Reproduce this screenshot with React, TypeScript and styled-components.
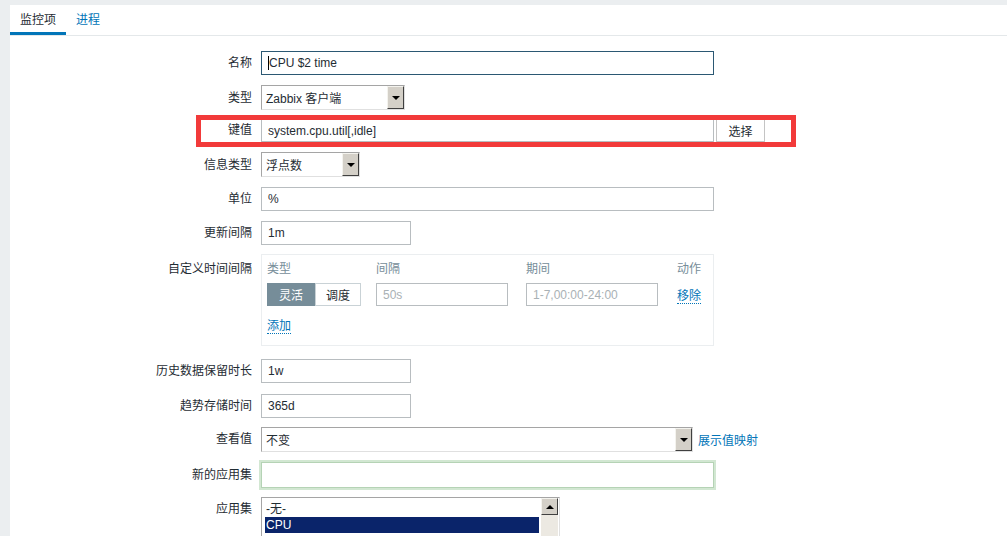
import React from "react";
import styled, { createGlobalStyle, css } from "styled-components";

//colors
const colors = {
  page: "#ebeef0",
  text: "#1f2c33",
  link: "#0275b8",
  muted: "#768d99",
  border: "#b8bdc0",
  classic: "#d4d0c8",
  navy: "#0a246a",
  red: "#f23a3a",
};

const GlobalStyle = createGlobalStyle`
  html, body {
    margin: 0;
    padding: 0;
    background: ${colors.page};
  }
  body {
    font-family: "Liberation Sans", "Noto Sans CJK SC", Arial, sans-serif;
    font-size: 12px;
    color: ${colors.text};
    overflow: hidden;
  }
`;

//white page panel
const Panel = styled.div`
  margin: 5px 0 0 10px;
  min-height: 531px;
  background: #ffffff;
`;

//tabs
const TabBar = styled.div`
  display: flex;
  height: 30px;
  border-bottom: 1px solid #e4e8ea;
`;

const Tab = styled.div<{ $active?: boolean }>`
  padding: 8px 10px 0;
  line-height: 14px;
  font-size: 12px;
  color: ${(p) => (p.$active ? colors.text : colors.link)};
  border-bottom: 3px solid ${(p) => (p.$active ? colors.link : "transparent")};
`;

//form
const Form = styled.div`
  display: flex;
  flex-direction: column;
  gap: 10px;
  padding-top: 15px;
`;

const Row = styled.div<{ $mark?: boolean; $gap?: number }>`
  position: relative;
  display: flex;
  align-items: flex-start;
  margin-top: ${(p) => p.$gap ?? 0}px;
  ${(p) =>
    p.$mark &&
    css`
      &::after {
        content: "";
        position: absolute;
        left: 186px;
        top: -4px;
        width: 590px;
        height: 22px;
        border: 5px solid ${colors.red};
        pointer-events: none;
      }
    `}
`;

const Label = styled.div<{ $top?: number }>`
  width: 242px;
  padding-right: 9px;
  padding-top: ${(p) => p.$top ?? 5}px;
  text-align: right;
  line-height: 14px;
  flex-shrink: 0;
`;

const Field = styled.div`
  display: flex;
  align-items: center;
`;

const TextBox = styled.div<{ $w: number; $h?: number; $focus?: boolean; $glow?: boolean; $placeholder?: boolean }>`
  box-sizing: border-box;
  width: ${(p) => p.$w}px;
  height: ${(p) => p.$h ?? 24}px;
  padding: 0 6px;
  display: flex;
  align-items: center;
  background: #fff;
  border: 1px solid ${(p) => (p.$focus ? "#2b5873" : p.$glow ? "#b5d3b5" : colors.border)};
  color: ${(p) => (p.$placeholder ? "#a9b1b5" : colors.text)};
  white-space: nowrap;
  ${(p) =>
    p.$glow &&
    css`
      box-shadow: 0 0 0 2px #d2e7d2;
    `}
`;

const Caret = styled.span`
  display: inline-block;
  width: 1px;
  height: 14px;
  background: #000;
`;

//classic windows style select
const Select = styled.div<{ $w: number }>`
  box-sizing: border-box;
  width: ${(p) => p.$w}px;
  height: 25px;
  display: flex;
  align-items: stretch;
  background: #fff;
  border: 1px solid #a5a5a5;
  border-right-color: #e0e0e0;
  border-bottom-color: #e0e0e0;
`;

const SelectText = styled.div`
  flex: 1;
  display: flex;
  align-items: center;
  padding-left: 4px;
  white-space: nowrap;
`;

const ArrowBtn = styled.div<{ $up?: boolean }>`
  width: 17px;
  box-sizing: border-box;
  background: ${colors.classic};
  border-top: 1px solid #f4f3ee;
  border-left: 1px solid #f4f3ee;
  border-right: 1px solid #404040;
  border-bottom: 1px solid #404040;
  display: flex;
  align-items: center;
  justify-content: center;

  &::before {
    content: "";
    width: 0;
    height: 0;
    border-left: 4px solid transparent;
    border-right: 4px solid transparent;
    ${(p) =>
      p.$up ? `border-bottom: 4px solid #000;` : `border-top: 4px solid #000;`}
  }
`;

const Button = styled.div`
  box-sizing: border-box;
  width: 49px;
  height: 23px;
  margin-left: 2px;
  display: flex;
  align-items: center;
  justify-content: center;
  background: #fff;
  border: 1px solid #c4c4c4;
`;

const Link = styled.span<{ $dotted?: boolean; $space?: number }>`
  color: ${colors.link};
  margin-left: ${(p) => p.$space ?? 0}px;
  ${(p) =>
    p.$dotted &&
    css`
      border-bottom: 1px dotted ${colors.link};
    `}
`;

//custom interval table
const IntervalBox = styled.div`
  box-sizing: border-box;
  width: 453px;
  padding: 7px 5px 12px;
  border: 1px solid #ebeef0;
`;

const IntervalGrid = styled.div`
  display: grid;
  grid-template-columns: 109px 150px 151px auto;
  row-gap: 7px;
  align-items: center;
`;

const Head = styled.div`
  color: ${colors.muted};
  line-height: 14px;
`;

const Toggle = styled.div`
  display: flex;
  height: 23px;
`;

const ToggleOpt = styled.div<{ $on?: boolean; $w: number }>`
  box-sizing: border-box;
  width: ${(p) => p.$w}px;
  display: flex;
  align-items: center;
  justify-content: center;
  background: ${(p) => (p.$on ? colors.muted : "#fff")};
  color: ${(p) => (p.$on ? "#fff" : colors.text)};
  border: 1px solid ${(p) => (p.$on ? colors.muted : "#c9d2d6")};
`;

const AddRow = styled.div`
  margin-top: 13px;
  line-height: 14px;
`;

//list box
const ListBox = styled.div`
  box-sizing: border-box;
  width: 299px;
  height: 60px;
  display: flex;
  background: #fff;
  border: 1px solid #a5a5a5;
  border-right-color: #e0e0e0;
`;

const ListItems = styled.div`
  flex: 1;
  padding: 3px 2px 0 3px;
`;

const ListItem = styled.div<{ $sel?: boolean }>`
  height: 16px;
  line-height: 16px;
  padding-left: 1px;
  background: ${(p) => (p.$sel ? colors.navy : "transparent")};
  color: ${(p) => (p.$sel ? "#fff" : colors.text)};
`;

const ScrollBar = styled.div`
  width: 17px;
  display: flex;
  flex-direction: column;
  background: #ece9e2;
  margin-right: 1px;
`;

const ScrollUp = styled(ArrowBtn)`
  height: 17px;
  flex-shrink: 0;
`;

const App: React.FC = () => {
  return (
    <>
      <GlobalStyle />
      <Panel>
        <TabBar>
          <Tab $active>监控项</Tab>
          <Tab>进程</Tab>
        </TabBar>
        <Form>
          {/* 名称 */}
          <Row>
            <Label>名称</Label>
            <TextBox $w={453} $focus>
              <Caret />
              CPU $2 time
            </TextBox>
          </Row>
          <Row>
            <Label $top={6}>类型</Label>
            <Select $w={144}>
              <SelectText>Zabbix 客户端</SelectText>
              <ArrowBtn />
            </Select>
          </Row>
          {/* highlighted key row */}
          <Row $mark $gap={-1}>
            <Label $top={4}>键值</Label>
            <Field>
              <TextBox $w={453} $h={23}>system.cpu.util[,idle]</TextBox>
              <Button>选择</Button>
            </Field>
          </Row>
          <Row>
            <Label $top={6}>信息类型</Label>
            <Select $w={99}>
              <SelectText>浮点数</SelectText>
              <ArrowBtn />
            </Select>
          </Row>
          <Row>
            <Label>单位</Label>
            <TextBox $w={453}>%</TextBox>
          </Row>
          <Row>
            <Label>更新间隔</Label>
            <TextBox $w={150}>1m</TextBox>
          </Row>
          <Row $gap={-1}>
            <Label $top={8}>自定义时间间隔</Label>
            <IntervalBox>
              <IntervalGrid>
                <Head>类型</Head>
                <Head>间隔</Head>
                <Head>期间</Head>
                <Head>动作</Head>
                <Toggle>
                  <ToggleOpt $on $w={48}>灵活</ToggleOpt>
                  <ToggleOpt $w={46}>调度</ToggleOpt>
                </Toggle>
                <TextBox $w={132} $h={23} $placeholder>50s</TextBox>
                <TextBox $w={132} $h={23} $placeholder>1-7,00:00-24:00</TextBox>
                <div>
                  <Link $dotted>移除</Link>
                </div>
              </IntervalGrid>
              <AddRow>
                <Link $dotted>添加</Link>
              </AddRow>
            </IntervalBox>
          </Row>
          <Row $gap={3}>
            <Label>历史数据保留时长</Label>
            <TextBox $w={150}>1w</TextBox>
          </Row>
          <Row $gap={1}>
            <Label>趋势存储时间</Label>
            <TextBox $w={150}>365d</TextBox>
          </Row>
          <Row $gap={-1}>
            <Label>查看值</Label>
            <Field>
              <Select $w={432}>
                <SelectText>不变</SelectText>
                <ArrowBtn />
              </Select>
              <Link $space={5}>展示值映射</Link>
            </Field>
          </Row>
          <Row>
            <Label $top={6}>新的应用集</Label>
            <TextBox $w={453} $h={26} $glow />
          </Row>
          <Row $gap={-1}>
            <Label $top={5}>应用集</Label>
            <ListBox>
              <ListItems>
                <ListItem>-无-</ListItem>
                <ListItem $sel>CPU</ListItem>
              </ListItems>
              <ScrollBar>
                <ScrollUp $up />
              </ScrollBar>
            </ListBox>
          </Row>
        </Form>
      </Panel>
    </>
  );
};

export default App;
